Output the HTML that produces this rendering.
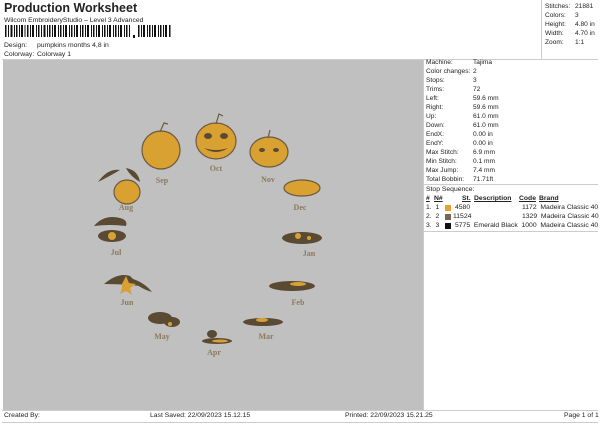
<!DOCTYPE html><html><head><style>
body{margin:0;width:600px;height:424px;background:#fff;position:relative;overflow:hidden;font-family:"Liberation Sans",sans-serif;color:#222}
.a{position:absolute;white-space:nowrap}
.s{font-size:6.8px}
table{border-collapse:collapse;font-size:6.6px}
td{padding:0;height:9px;line-height:9px}
</style></head><body>
<div class="a" style="left:4px;top:1px;font-size:12.5px;font-weight:bold">Production Worksheet</div>
<div class="a s" style="left:4px;top:17px">Wilcom EmbroideryStudio – Level 3 Advanced</div>
<svg class="a" style="left:5px;top:25px" width="170" height="14">
<g fill="#111">
<rect x="0" y="0" width="1.5" height="12"/><rect x="3" y="0" width="1" height="12"/><rect x="5.5" y="0" width="2" height="12"/><rect x="9" y="0" width="1" height="12"/><rect x="11" y="0" width="1.5" height="12"/><rect x="14" y="0" width="1" height="12"/><rect x="16" y="0" width="2" height="12"/><rect x="19.5" y="0" width="1" height="12"/><rect x="22" y="0" width="1.5" height="12"/><rect x="25" y="0" width="1" height="12"/><rect x="27" y="0" width="2" height="12"/><rect x="31" y="0" width="1" height="12"/><rect x="33" y="0" width="1.5" height="12"/><rect x="36" y="0" width="1" height="12"/><rect x="38.5" y="0" width="2" height="12"/><rect x="42" y="0" width="1" height="12"/><rect x="44" y="0" width="1.5" height="12"/><rect x="47" y="0" width="1" height="12"/><rect x="49" y="0" width="2" height="12"/><rect x="53" y="0" width="1" height="12"/><rect x="55" y="0" width="1.5" height="12"/><rect x="58" y="0" width="1" height="12"/><rect x="60" y="0" width="2" height="12"/><rect x="64" y="0" width="1" height="12"/><rect x="66" y="0" width="1.5" height="12"/><rect x="69" y="0" width="1" height="12"/><rect x="71" y="0" width="2" height="12"/><rect x="75" y="0" width="1" height="12"/><rect x="77" y="0" width="1.5" height="12"/><rect x="80" y="0" width="1" height="12"/><rect x="82" y="0" width="2" height="12"/><rect x="86" y="0" width="1" height="12"/><rect x="88" y="0" width="1.5" height="12"/><rect x="91" y="0" width="1" height="12"/><rect x="93" y="0" width="2" height="12"/><rect x="97" y="0" width="1" height="12"/><rect x="99" y="0" width="1.5" height="12"/><rect x="102" y="0" width="1" height="12"/><rect x="104" y="0" width="2" height="12"/><rect x="108" y="0" width="1" height="12"/><rect x="110" y="0" width="1.5" height="12"/><rect x="113" y="0" width="1" height="12"/><rect x="115" y="0" width="2" height="12"/><rect x="119" y="0" width="1" height="12"/><rect x="121" y="0" width="1.5" height="12"/><rect x="124" y="0" width="1" height="12"/><rect x="128" y="10" width="2" height="3"/><rect x="133" y="0" width="1.5" height="12"/><rect x="136" y="0" width="1" height="12"/><rect x="138" y="0" width="2" height="12"/><rect x="142" y="0" width="1" height="12"/><rect x="144" y="0" width="1.5" height="12"/><rect x="147" y="0" width="1" height="12"/><rect x="149" y="0" width="2" height="12"/><rect x="153" y="0" width="1" height="12"/><rect x="155" y="0" width="1.5" height="12"/><rect x="158" y="0" width="1" height="12"/><rect x="160" y="0" width="2" height="12"/><rect x="164" y="0" width="1.5" height="12"/></g></svg>
<div class="a s" style="left:4px;top:42px">Design:</div><div class="a s" style="left:37px;top:42px">pumpkins months 4,8 in</div>
<div class="a s" style="left:4px;top:51px">Colorway:</div><div class="a s" style="left:37px;top:51px">Colorway 1</div>
<div class="a" style="left:2px;top:59px;width:596px;border-top:1px solid #ccc"></div>
<div class="a" style="left:541px;top:0;width:57px;height:59px;border-left:1px solid #ccc"></div>
<table class="a" style="left:545px;top:2px"><tr><td style="min-width:30px">Stitches:</td><td>21881</td></tr><tr><td>Colors:</td><td>3</td></tr><tr><td>Height:</td><td>4.80 in</td></tr><tr><td>Width:</td><td>4.70 in</td></tr><tr><td>Zoom:</td><td>1:1</td></tr></table>
<div class="a" style="left:3px;top:60px;width:420px;height:350px;background:#c0c0c0"></div>
<div class="a" style="left:423px;top:60px;width:175px;height:350px;border-left:1px solid #ccc"></div>
<table class="a" style="left:426px;top:58px"><tr><td style="min-width:47px">Machine:</td><td>Tajima</td></tr><tr><td>Color changes:</td><td>2</td></tr><tr><td>Stops:</td><td>3</td></tr><tr><td>Trims:</td><td>72</td></tr><tr><td>Left:</td><td>59.6 mm</td></tr><tr><td>Right:</td><td>59.6 mm</td></tr><tr><td>Up:</td><td>61.0 mm</td></tr><tr><td>Down:</td><td>61.0 mm</td></tr><tr><td>EndX:</td><td>0.00 in</td></tr><tr><td>EndY:</td><td>0.00 in</td></tr><tr><td>Max Stitch:</td><td>6.9 mm</td></tr><tr><td>Min Stitch:</td><td>0.1 mm</td></tr><tr><td>Max Jump:</td><td>7.4 mm</td></tr><tr><td>Total Bobbin:</td><td>71.71ft</td></tr></table>
<div class="a" style="left:424px;top:184px;width:174px;border-top:1px solid #ccc"></div>
<div class="a s" style="left:426px;top:186px">Stop Sequence:</div>
<div class="a s" style="left:426px;top:195px;font-weight:bold;text-decoration:underline">#</div>
<div class="a s" style="left:434px;top:195px;font-weight:bold;text-decoration:underline">N#</div>
<div class="a s" style="left:462px;top:195px;font-weight:bold;text-decoration:underline">St.</div>
<div class="a s" style="left:474px;top:195px;font-weight:bold;text-decoration:underline">Description</div>
<div class="a s" style="left:519px;top:195px;font-weight:bold;text-decoration:underline">Code</div>
<div class="a s" style="left:539px;top:195px;font-weight:bold;text-decoration:underline">Brand</div>
<div class="a s" style="left:426px;top:204px">1.&nbsp;&nbsp;1</div><div class="a" style="left:445px;top:205px;width:6px;height:6px;background:#e8a030"></div><div class="a s" style="left:455px;top:204px">4580</div><div class="a s" style="left:522px;top:204px">1172&nbsp; Madeira Classic 40</div>
<div class="a s" style="left:426px;top:213px">2.&nbsp;&nbsp;2</div><div class="a" style="left:445px;top:214px;width:6px;height:6px;background:#7a6550"></div><div class="a s" style="left:453px;top:213px">11524</div><div class="a s" style="left:522px;top:213px">1329&nbsp; Madeira Classic 40</div>
<div class="a s" style="left:426px;top:222px">3.&nbsp;&nbsp;3</div><div class="a" style="left:445px;top:223px;width:6px;height:6px;background:#111"></div><div class="a s" style="left:455px;top:222px">5775&nbsp; Emerald Black&nbsp; 1000&nbsp; Madeira Classic 40</div>
<div class="a" style="left:424px;top:231px;width:174px;border-top:1px solid #ccc"></div>
<svg class="a" style="left:0;top:0" width="600" height="424" font-family="Liberation Serif,serif" font-weight="bold" font-size="8" fill="#8b7a5e" text-anchor="middle">
<g stroke="#6b5a40" stroke-width="1.2">
<ellipse cx="161" cy="150" rx="19" ry="19" fill="#d9a032"/><path d="M160 132 l4 -9 l4 1" fill="none"/>
<ellipse cx="216" cy="141" rx="20" ry="18" fill="#d9a032"/><path d="M216 124 l3 -10 l4 2" fill="none"/>
<ellipse cx="269" cy="152" rx="19" ry="15" fill="#d9a032"/><path d="M268 138 l2 -8" fill="none"/>
<ellipse cx="302" cy="188" rx="18" ry="8" fill="#d9a032"/>
<ellipse cx="127" cy="192" rx="13" ry="12" fill="#d9a032"/>
</g>
<g fill="#5a4a34"><ellipse cx="208" cy="136" rx="4" ry="3"/><ellipse cx="224" cy="136" rx="4" ry="3"/><path d="M204 148 q12 8 24 0 q-12 4 -24 0"/><ellipse cx="262" cy="150" rx="3" ry="2"/><ellipse cx="276" cy="150" rx="3" ry="2"/>
<path d="M98 182 q10 -14 22 -12 q-10 6 -22 12z"/><path d="M126 168 q12 2 14 14 q-10 -6 -14 -14z"/>
<ellipse cx="302" cy="238" rx="20" ry="6"/><ellipse cx="292" cy="286" rx="23" ry="5"/><ellipse cx="263" cy="322" rx="20" ry="4"/><ellipse cx="217" cy="341" rx="15" ry="3"/><ellipse cx="212" cy="334" rx="5" ry="4"/>
<ellipse cx="160" cy="318" rx="12" ry="6"/><ellipse cx="172" cy="322" rx="8" ry="5"/>
<path d="M104 284 q14 -12 26 -8 l10 10 q-16 -2 -36 -2z"/><path d="M130 278 q14 4 22 14 q-14 -4 -22 -14z"/>
<path d="M94 226 q10 -12 26 -8 q8 2 6 8 q-16 -2 -32 0z"/><ellipse cx="112" cy="236" rx="14" ry="6"/></g>
<g fill="#d9a032"><circle cx="298" cy="236" r="3"/><circle cx="309" cy="238" r="2"/><ellipse cx="298" cy="284" rx="8" ry="2"/><ellipse cx="262" cy="320" rx="6" ry="2"/><ellipse cx="220" cy="341" rx="8" ry="1.5"/><path d="M122 284 l4 -8 l3 7 l7 1 l-6 4 l2 7 l-6 -4 l-6 3 l2 -6z"/><circle cx="112" cy="236" r="4"/><circle cx="170" cy="324" r="2"/></g>
<text x="162" y="183">Sep</text><text x="216" y="171">Oct</text><text x="268" y="182">Nov</text><text x="300" y="210">Dec</text><text x="309" y="256">Jan</text><text x="298" y="305">Feb</text><text x="266" y="339">Mar</text><text x="214" y="355">Apr</text><text x="162" y="339">May</text><text x="127" y="305">Jun</text><text x="116" y="255">Jul</text><text x="126" y="210">Aug</text>
</svg>
<div class="a" style="left:2px;top:410px;width:596px;height:11px;border-top:1px solid #ccc;border-bottom:1px solid #ccc"></div>
<div class="a s" style="left:4px;top:412px">Created By:</div>
<div class="a s" style="left:150px;top:412px">Last Saved: 22/09/2023 15.12.15</div>
<div class="a s" style="left:345px;top:412px">Printed: 22/09/2023 15.21.25</div>
<div class="a s" style="left:564px;top:412px">Page 1 of 1</div>
</body></html>
